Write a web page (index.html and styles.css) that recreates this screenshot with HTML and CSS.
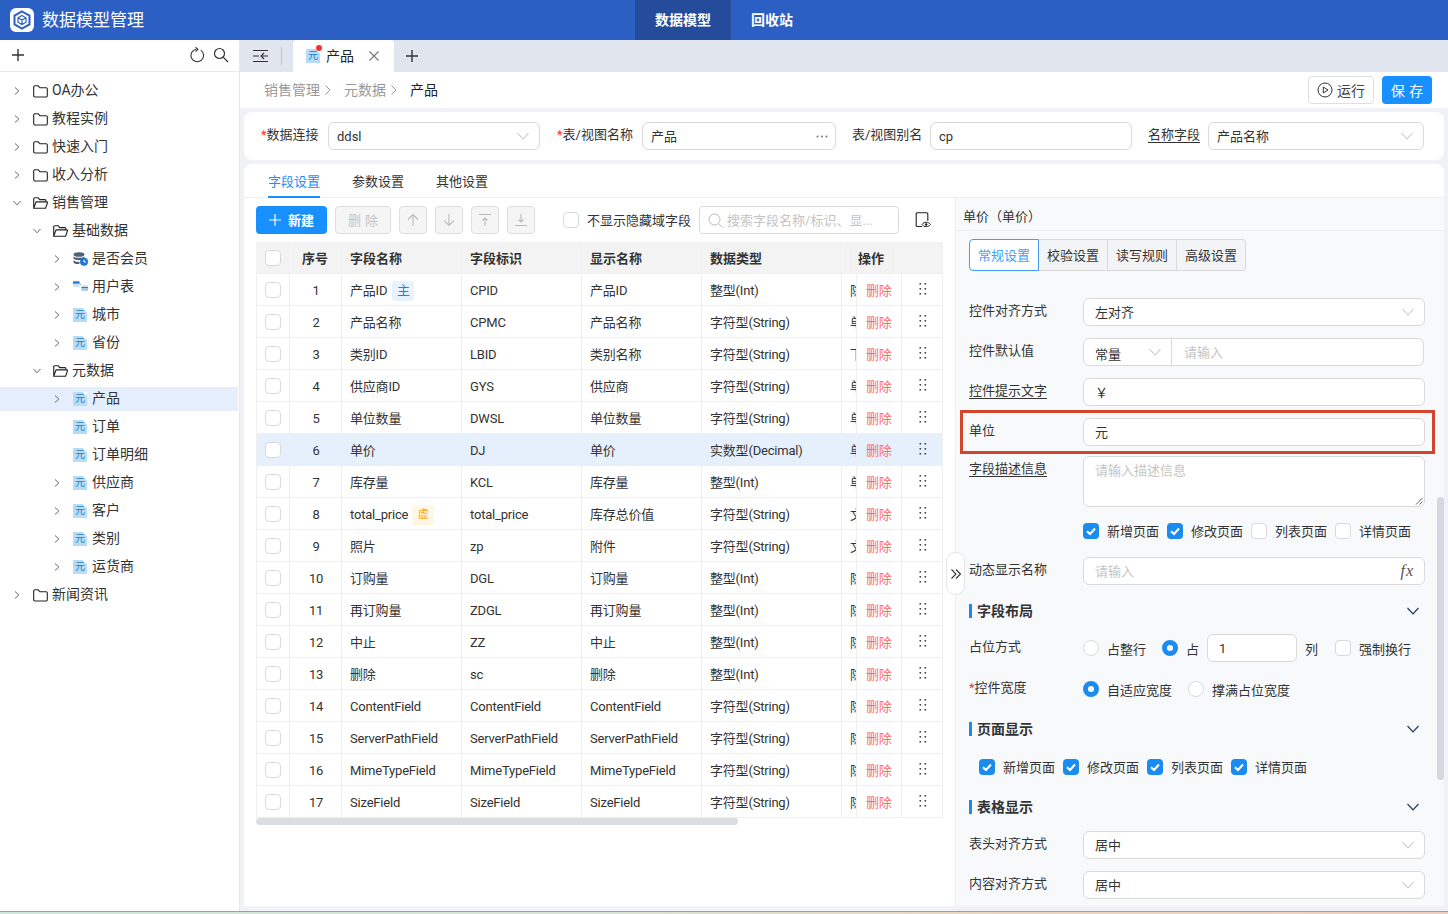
FILE: index.html
```html
<!DOCTYPE html>
<html lang="zh-CN">
<head>
<meta charset="utf-8">
<title>数据模型管理</title>
<link rel="stylesheet" href="styles.css">
</head>
<body>
<svg class="defs" width="0" height="0" aria-hidden="true">
  <symbol id="chev-r" viewBox="0 0 10 10"><path d="M3 1.500 6.800 5 3 8.500" fill="none" stroke="currentColor" stroke-width="1"/></symbol>
  <symbol id="chev-d" viewBox="0 0 10 10"><path d="M1.500 3 5 6.800 8.500 3" fill="none" stroke="currentColor" stroke-width="1"/></symbol>
  <symbol id="folder" viewBox="0 0 15 13"><path d="M.7 2a1.200 1.200 0 0 1 1.200-1.200h3.400l1.600 2h6.200a1.200 1.200 0 0 1 1.200 1.200v6.800a1.200 1.200 0 0 1-1.200 1.200H1.900a1.200 1.200 0 0 1-1.200-1.200Z" fill="none" stroke="#222" stroke-width="1.100"/></symbol>
  <symbol id="folder-open" viewBox="0 0 15 13"><path d="M.7 11.300V2a1.200 1.200 0 0 1 1.200-1.200h3.400l1.400 1.800h5.200a1 1 0 0 1 1 1v1.300M.7 11.300 3.100 4.900h10.800a.6.600 0 0 1 .6.8l-1.900 5.600Z" fill="none" stroke="#222" stroke-width="1.100"/></symbol>
  <symbol id="select" viewBox="0 0 14 14"><path d="M1.500 4 7 10 12.500 4" fill="none" stroke="#c4c7cc" stroke-width="1.100"/></symbol>
  <symbol id="arrow-sec" viewBox="0 0 14 14"><path d="M1.500 4 7 9.800 12.500 4" fill="none" stroke="#1f3a5f" stroke-width="1.200"/></symbol>
  <symbol id="check" viewBox="0 0 16 16"><rect width="16" height="16" rx="4" fill="#1a8cf0"/><path d="M4 8.200 7 11l5-5.500" fill="none" stroke="#fff" stroke-width="2"/></symbol>
  <symbol id="drag" viewBox="0 0 10 12"><g fill="#444"><rect x="1.500" y="0" width="1.600" height="1.600"/><rect x="6.500" y="0" width="1.600" height="1.600"/><rect x="1.500" y="5" width="1.600" height="1.600"/><rect x="6.500" y="5" width="1.600" height="1.600"/><rect x="1.500" y="10" width="1.600" height="1.600"/><rect x="6.500" y="10" width="1.600" height="1.600"/></g></symbol>
</svg>

<div class="app">
  <header class="topbar">
    <div class="brand">
      <span class="logo">
        <svg width="20" height="20" viewBox="0 0 20 20"><path d="M10 1.500 17.500 5.700v8.600L10 18.500 2.500 14.300V5.700Z" fill="none" stroke="#2b5fc4" stroke-width="2"/><path d="M10 5.500 14 7.800v4.400L10 14.500 6 12.200V7.800ZM6 7.800 10 10l4-2.200M10 10v4.500" fill="none" stroke="#2b5fc4" stroke-width="1.200"/></svg>
      </span>
      <span class="brand-name">数据模型管理</span>
    </div>
    <nav class="topnav">
      <a class="topnav-item is-active">数据模型</a>
      <a class="topnav-item">回收站</a>
    </nav>
  </header>

  <div class="workspace">
    <aside class="sidebar">
      <div class="side-tools">
        <svg class="tool-plus" width="14" height="14" viewBox="0 0 14 14"><path d="M7 1v12M1 7h12" stroke="#333" stroke-width="1.400" fill="none"/></svg>
        <svg class="tool-refresh" width="16" height="16" viewBox="0 0 16 16"><path d="M10.700 3.100A6.300 6.300 0 1 1 6.200 2.200M5.400.3 7.900 2.400 5.600 4.700" fill="none" stroke="#333" stroke-width="1.100"/></svg>
        <svg width="16" height="16" viewBox="0 0 16 16"><circle cx="6.500" cy="6.500" r="5" fill="none" stroke="#333" stroke-width="1.200"/><path d="m10.200 10.200 4.800 4.800" stroke="#333" stroke-width="1.200"/></svg>
      </div>
      <ul class="tree">
        <li class="node l0"><svg class="chev"><use href="#chev-r"/></svg><svg class="ico-folder"><use href="#folder"/></svg><span>OA办公</span></li>
        <li class="node l0"><svg class="chev"><use href="#chev-r"/></svg><svg class="ico-folder"><use href="#folder"/></svg><span>教程实例</span></li>
        <li class="node l0"><svg class="chev"><use href="#chev-r"/></svg><svg class="ico-folder"><use href="#folder"/></svg><span>快速入门</span></li>
        <li class="node l0"><svg class="chev"><use href="#chev-r"/></svg><svg class="ico-folder"><use href="#folder"/></svg><span>收入分析</span></li>
        <li class="node l0"><svg class="chev"><use href="#chev-d"/></svg><svg class="ico-folder"><use href="#folder-open"/></svg><span>销售管理</span></li>
        <li class="node l1"><svg class="chev"><use href="#chev-d"/></svg><svg class="ico-folder"><use href="#folder-open"/></svg><span>基础数据</span></li>
        <li class="node l2"><svg class="chev"><use href="#chev-r"/></svg>
          <svg class="ico-data" viewBox="0 0 15 14"><ellipse cx="6" cy="2.500" rx="5.500" ry="2.300" fill="#4d5f75"/><path d="M.5 4.300c1 2 10 2 11 0v2.200c-1 2-10 2-11 0ZM.5 8c1 2 5 2 6 1.800v2c-1 .6-5 .4-6-1.300Z" fill="#4d5f75"/><circle cx="11" cy="9.800" r="4" fill="#1f78d1"/><path d="M11 7.800v2.200h1.800" stroke="#fff" fill="none"/></svg>
          <span>是否会员</span></li>
        <li class="node l2"><svg class="chev"><use href="#chev-r"/></svg>
          <svg class="ico-data" viewBox="0 0 16 14"><rect x="0" y="1" width="7" height="6" fill="#cfe4f8"/><rect x="0" y="1" width="7" height="2.400" fill="#1f78d1"/><rect x="9" y="5" width="7" height="6.500" fill="#cfe4f8"/><rect x="9" y="7" width="7" height="1.300" fill="#1f78d1"/><rect x="9" y="9.500" width="7" height="1" fill="#7db5e8"/><path d="M7 4h2" stroke="#9ab"/></svg>
          <span>用户表</span></li>
        <li class="node l2"><svg class="chev"><use href="#chev-r"/></svg><i class="yuan">元</i><span>城市</span></li>
        <li class="node l2"><svg class="chev"><use href="#chev-r"/></svg><i class="yuan">元</i><span>省份</span></li>
        <li class="node l1"><svg class="chev"><use href="#chev-d"/></svg><svg class="ico-folder"><use href="#folder-open"/></svg><span>元数据</span></li>
        <li class="node l2 is-current"><svg class="chev"><use href="#chev-r"/></svg><i class="yuan">元</i><span>产品</span></li>
        <li class="node l2"><i class="chev"></i><i class="yuan">元</i><span>订单</span></li>
        <li class="node l2"><i class="chev"></i><i class="yuan">元</i><span>订单明细</span></li>
        <li class="node l2"><svg class="chev"><use href="#chev-r"/></svg><i class="yuan">元</i><span>供应商</span></li>
        <li class="node l2"><svg class="chev"><use href="#chev-r"/></svg><i class="yuan">元</i><span>客户</span></li>
        <li class="node l2"><svg class="chev"><use href="#chev-r"/></svg><i class="yuan">元</i><span>类别</span></li>
        <li class="node l2"><svg class="chev"><use href="#chev-r"/></svg><i class="yuan">元</i><span>运货商</span></li>
        <li class="node l0"><svg class="chev"><use href="#chev-r"/></svg><svg class="ico-folder"><use href="#folder"/></svg><span>新闻资讯</span></li>
      </ul>
    </aside>

    <main class="main">
      <div class="tabbar">
        <svg class="tab-collapse" width="16" height="14" viewBox="0 0 16 14"><path d="M0 1.500h15M0 12.500h15M0 7h6M15 7H8M11 4 8 7l3 3" fill="none" stroke="#333" stroke-width="1.100"/></svg>
        <span class="tab-sep"></span>
        <div class="tab">
          <span class="tab-icon"><i class="yuan">元</i><b class="dot"></b></span>
          <span class="tab-title">产品</span>
          <svg width="12" height="12" viewBox="0 0 12 12"><path d="m1.500 1.500 9 9M10.500 1.500l-9 9" stroke="#777" stroke-width="1.100"/></svg>
        </div>
        <svg class="tab-add" width="14" height="14" viewBox="0 0 14 14"><path d="M7 1v12M1 7h12" stroke="#333" stroke-width="1.400" fill="none"/></svg>
      </div>

      <div class="crumbbar">
        <div class="crumbs">
          <span class="crumb">销售管理</span><svg class="crumb-sep" width="8" height="12" viewBox="0 0 8 12"><path d="m1.500 1.500 4.500 4.500-4.500 4.500" fill="none" stroke="#999"/></svg>
          <span class="crumb">元数据</span><svg class="crumb-sep" width="8" height="12" viewBox="0 0 8 12"><path d="m1.500 1.500 4.500 4.500-4.500 4.500" fill="none" stroke="#999"/></svg>
          <span class="crumb-now">产品</span>
        </div>
        <div class="actions">
          <button class="btn-run"><svg width="16" height="16" viewBox="0 0 16 16"><circle cx="8" cy="8" r="7" fill="none" stroke="#333"/><path d="M6.300 5v6L11 8Z" fill="none" stroke="#333"/></svg>运行</button>
          <button class="btn-save">保 存</button>
        </div>
      </div>

      <section class="card-base">
        <label class="lbl req lbl-conn">数据连接</label>
        <div class="inp w-conn"><span>ddsl</span><svg class="sel-arrow"><use href="#select"/></svg></div>
        <label class="lbl req lbl-view">表/视图名称</label>
        <div class="inp w-view"><span>产品</span><svg class="dots" width="12" height="3" viewBox="0 0 12 3"><circle cx="1.500" cy="1.500" r="1" fill="#777"/><circle cx="6" cy="1.500" r="1" fill="#777"/><circle cx="10.500" cy="1.500" r="1" fill="#777"/></svg></div>
        <label class="lbl lbl-alias">表/视图别名</label>
        <div class="inp w-alias"><span>cp</span></div>
        <label class="lbl lbl-name link">名称字段</label>
        <div class="inp w-name"><span>产品名称</span><svg class="sel-arrow"><use href="#select"/></svg></div>
      </section>

      <section class="card-fields">
        <div class="fields-tabs">
          <a class="ftab is-active">字段设置</a>
          <a class="ftab">参数设置</a>
          <a class="ftab">其他设置</a>
        </div>
        <div class="fields-body">
          <div class="left">
            <div class="toolbar">
              <button class="btn-new"><svg width="12" height="12" viewBox="0 0 12 12"><path d="M6 0v12M0 6h12" stroke="#fff" stroke-width="1.200"/></svg>新建</button>
              <button class="btn-del">删 除</button>
              <button class="btn-icon"><svg width="14" height="14" viewBox="0 0 14 14"><path d="M7 13V1.500M2 6.500l5-5 5 5" fill="none" stroke="#bbb" stroke-width="1.100"/></svg></button>
              <button class="btn-icon"><svg width="14" height="14" viewBox="0 0 14 14"><path d="M7 1v11.500M2 7.500l5 5 5-5" fill="none" stroke="#bbb" stroke-width="1.100"/></svg></button>
              <button class="btn-icon"><svg width="14" height="14" viewBox="0 0 14 14"><path d="M1 1.500h12M7 13V5M4.500 7.500 7 5l2.500 2.500" fill="none" stroke="#bbb" stroke-width="1.100"/></svg></button>
              <button class="btn-icon"><svg width="14" height="14" viewBox="0 0 14 14"><path d="M1 12.500h12M7 1v8M4.500 6.500 7 9l2.500-2.500" fill="none" stroke="#bbb" stroke-width="1.100"/></svg></button>
              <label class="hide-opt"><span class="cb"></span>不显示隐藏域字段</label>
              <div class="search"><svg width="15" height="15" viewBox="0 0 15 15"><circle cx="6.500" cy="6.500" r="5.500" fill="none" stroke="#bbb"/><path d="m10.500 10.500 4 4" stroke="#bbb"/></svg><span>搜索字段名称/标识、显...</span></div>
              <svg class="eye-doc" width="16" height="16" viewBox="0 0 16 16"><path d="M7 14.500H2.200a1 1 0 0 1-1-1V1.700a1 1 0 0 1 1-1h9.600a1 1 0 0 1 1 1v7" fill="none" stroke="#222" stroke-width="1.100"/><path d="M7 12.500c2-3 6.500-3 8.500 0-2 2.800-6.500 2.800-8.500 0Z" fill="#fff" stroke="#222"/><circle cx="11.200" cy="12.500" r="1.200" fill="#222"/></svg>
            </div>

            <div class="grid">
              <div class="ghead">
                <div class="c"><span class="cb"></span></div>
                <div class="c ctr">序号</div>
                <div class="c">字段名称</div>
                <div class="c">字段标识</div>
                <div class="c">显示名称</div>
                <div class="c">数据类型</div>
                <div class="c"></div>
                <div class="c">操作</div>
                <div class="c"></div>
              </div>
              <div class="grow"><div class="c"><span class="cb"></span></div><div class="c ctr">1</div><div class="c">产品ID<em class="tag tag-pk">主</em></div><div class="c">CPID</div><div class="c">产品ID</div><div class="c">整型(Int)</div><div class="c clip">隐藏域</div><div class="c del">删除</div><div class="c ctr"><svg class="drag"><use href="#drag"/></svg></div></div>
              <div class="grow"><div class="c"><span class="cb"></span></div><div class="c ctr">2</div><div class="c">产品名称</div><div class="c">CPMC</div><div class="c">产品名称</div><div class="c">字符型(String)</div><div class="c clip">单行文本</div><div class="c del">删除</div><div class="c ctr"><svg class="drag"><use href="#drag"/></svg></div></div>
              <div class="grow"><div class="c"><span class="cb"></span></div><div class="c ctr">3</div><div class="c">类别ID</div><div class="c">LBID</div><div class="c">类别名称</div><div class="c">字符型(String)</div><div class="c clip">下拉框</div><div class="c del">删除</div><div class="c ctr"><svg class="drag"><use href="#drag"/></svg></div></div>
              <div class="grow"><div class="c"><span class="cb"></span></div><div class="c ctr">4</div><div class="c">供应商ID</div><div class="c">GYS</div><div class="c">供应商</div><div class="c">字符型(String)</div><div class="c clip">单行文本</div><div class="c del">删除</div><div class="c ctr"><svg class="drag"><use href="#drag"/></svg></div></div>
              <div class="grow"><div class="c"><span class="cb"></span></div><div class="c ctr">5</div><div class="c">单位数量</div><div class="c">DWSL</div><div class="c">单位数量</div><div class="c">字符型(String)</div><div class="c clip">单行文本</div><div class="c del">删除</div><div class="c ctr"><svg class="drag"><use href="#drag"/></svg></div></div>
              <div class="grow is-sel"><div class="c"><span class="cb"></span></div><div class="c ctr">6</div><div class="c">单价</div><div class="c">DJ</div><div class="c">单价</div><div class="c">实数型(Decimal)</div><div class="c clip">单行文本</div><div class="c del">删除</div><div class="c ctr"><svg class="drag"><use href="#drag"/></svg></div></div>
              <div class="grow"><div class="c"><span class="cb"></span></div><div class="c ctr">7</div><div class="c">库存量</div><div class="c">KCL</div><div class="c">库存量</div><div class="c">整型(Int)</div><div class="c clip">单行文本</div><div class="c del">删除</div><div class="c ctr"><svg class="drag"><use href="#drag"/></svg></div></div>
              <div class="grow"><div class="c"><span class="cb"></span></div><div class="c ctr">8</div><div class="c">total_price<em class="tag tag-vt">虚</em></div><div class="c">total_price</div><div class="c">库存总价值</div><div class="c">字符型(String)</div><div class="c clip">文本</div><div class="c del">删除</div><div class="c ctr"><svg class="drag"><use href="#drag"/></svg></div></div>
              <div class="grow"><div class="c"><span class="cb"></span></div><div class="c ctr">9</div><div class="c">照片</div><div class="c">zp</div><div class="c">附件</div><div class="c">字符型(String)</div><div class="c clip">文件</div><div class="c del">删除</div><div class="c ctr"><svg class="drag"><use href="#drag"/></svg></div></div>
              <div class="grow"><div class="c"><span class="cb"></span></div><div class="c ctr">10</div><div class="c">订购量</div><div class="c">DGL</div><div class="c">订购量</div><div class="c">整型(Int)</div><div class="c clip">隐藏域</div><div class="c del">删除</div><div class="c ctr"><svg class="drag"><use href="#drag"/></svg></div></div>
              <div class="grow"><div class="c"><span class="cb"></span></div><div class="c ctr">11</div><div class="c">再订购量</div><div class="c">ZDGL</div><div class="c">再订购量</div><div class="c">整型(Int)</div><div class="c clip">隐藏域</div><div class="c del">删除</div><div class="c ctr"><svg class="drag"><use href="#drag"/></svg></div></div>
              <div class="grow"><div class="c"><span class="cb"></span></div><div class="c ctr">12</div><div class="c">中止</div><div class="c">ZZ</div><div class="c">中止</div><div class="c">整型(Int)</div><div class="c clip">隐藏域</div><div class="c del">删除</div><div class="c ctr"><svg class="drag"><use href="#drag"/></svg></div></div>
              <div class="grow"><div class="c"><span class="cb"></span></div><div class="c ctr">13</div><div class="c">删除</div><div class="c">sc</div><div class="c">删除</div><div class="c">整型(Int)</div><div class="c clip">隐藏域</div><div class="c del">删除</div><div class="c ctr"><svg class="drag"><use href="#drag"/></svg></div></div>
              <div class="grow"><div class="c"><span class="cb"></span></div><div class="c ctr">14</div><div class="c">ContentField</div><div class="c">ContentField</div><div class="c">ContentField</div><div class="c">字符型(String)</div><div class="c clip">隐藏域</div><div class="c del">删除</div><div class="c ctr"><svg class="drag"><use href="#drag"/></svg></div></div>
              <div class="grow"><div class="c"><span class="cb"></span></div><div class="c ctr">15</div><div class="c">ServerPathField</div><div class="c">ServerPathField</div><div class="c">ServerPathField</div><div class="c">字符型(String)</div><div class="c clip">隐藏域</div><div class="c del">删除</div><div class="c ctr"><svg class="drag"><use href="#drag"/></svg></div></div>
              <div class="grow"><div class="c"><span class="cb"></span></div><div class="c ctr">16</div><div class="c">MimeTypeField</div><div class="c">MimeTypeField</div><div class="c">MimeTypeField</div><div class="c">字符型(String)</div><div class="c clip">隐藏域</div><div class="c del">删除</div><div class="c ctr"><svg class="drag"><use href="#drag"/></svg></div></div>
              <div class="grow"><div class="c"><span class="cb"></span></div><div class="c ctr">17</div><div class="c">SizeField</div><div class="c">SizeField</div><div class="c">SizeField</div><div class="c">字符型(String)</div><div class="c clip">隐藏域</div><div class="c del">删除</div><div class="c ctr"><svg class="drag"><use href="#drag"/></svg></div></div>
              <div class="hscroll"><span class="hthumb"></span></div>
            </div>
          </div>

          <div class="panel">
            <button class="panel-toggle"><svg width="12" height="12" viewBox="0 0 12 12"><path d="M1.500 1.500 6 6l-4.500 4.500M6 1.500 10.500 6 6 10.500" fill="none" stroke="#333" stroke-width="1.100"/></svg></button>
            <span class="vscroll"></span>
            <div class="panel-title">单价（单价）</div>
            <div class="panel-body">
              <div class="seg">
                <span class="seg-item is-active">常规设置</span><span class="seg-item">校验设置</span><span class="seg-item">读写规则</span><span class="seg-item">高级设置</span>
              </div>

              <div class="frow"><label class="flabel">控件对齐方式</label><div class="inp grow1"><span>左对齐</span><svg class="sel-arrow"><use href="#select"/></svg></div></div>
              <div class="frow"><label class="flabel">控件默认值</label>
                <div class="joined">
                  <div class="join-sel"><span>常量</span><svg class="sel-arrow"><use href="#select"/></svg></div>
                  <div class="join-inp">请输入</div>
                </div>
              </div>
              <div class="frow"><label class="flabel"><u>控件提示文字</u></label><div class="inp grow1"><span>￥</span></div></div>
              <div class="frow frow-unit"><label class="flabel">单位</label><div class="inp grow1"><span>元</span></div><span class="highlight"></span></div>
              <div class="frow frow-desc"><label class="flabel"><u>字段描述信息</u></label>
                <div class="textarea"><span>请输入描述信息</span><svg class="resize" width="8" height="8" viewBox="0 0 8 8"><path d="M1 7.500 7.500 1M4.500 7.500l3-3" stroke="#666" fill="none"/></svg></div>
              </div>
              <div class="checks checks-a">
                <label class="chk"><svg class="cbx"><use href="#check"/></svg>新增页面</label>
                <label class="chk"><svg class="cbx"><use href="#check"/></svg>修改页面</label>
                <label class="chk"><span class="cb"></span>列表页面</label>
                <label class="chk"><span class="cb"></span>详情页面</label>
              </div>
              <div class="frow frow-dyn"><label class="flabel">动态显示名称</label><div class="inp grow1 ph"><span>请输入</span><i class="fx">fx</i></div></div>

              <div class="sec sec-layout"><span class="sec-title">字段布局</span><svg class="sec-arrow"><use href="#arrow-sec"/></svg></div>
              <div class="frow frow-pos"><label class="flabel">占位方式</label>
                <div class="opts">
                  <label class="opt o-full"><span class="radio"></span>占整行</label>
                  <label class="opt o-col"><span class="radio on"></span>占</label>
                  <div class="inp num"><span>1</span></div>
                  <span class="col-unit">列</span>
                  <label class="opt"><span class="cb"></span>强制换行</label>
                </div>
              </div>
              <div class="frow frow-width"><label class="flabel req">控件宽度</label>
                <div class="opts">
                  <label class="opt o-auto"><span class="radio on"></span>自适应宽度</label>
                  <label class="opt"><span class="radio"></span>撑满占位宽度</label>
                </div>
              </div>

              <div class="sec sec-page"><span class="sec-title">页面显示</span><svg class="sec-arrow"><use href="#arrow-sec"/></svg></div>
              <div class="checks checks-b">
                <label class="chk"><svg class="cbx"><use href="#check"/></svg>新增页面</label>
                <label class="chk"><svg class="cbx"><use href="#check"/></svg>修改页面</label>
                <label class="chk"><svg class="cbx"><use href="#check"/></svg>列表页面</label>
                <label class="chk"><svg class="cbx"><use href="#check"/></svg>详情页面</label>
              </div>

              <div class="sec sec-table"><span class="sec-title">表格显示</span><svg class="sec-arrow"><use href="#arrow-sec"/></svg></div>
              <div class="frow"><label class="flabel">表头对齐方式</label><div class="inp grow1"><span>居中</span><svg class="sel-arrow"><use href="#select"/></svg></div></div>
              <div class="frow"><label class="flabel">内容对齐方式</label><div class="inp grow1"><span>居中</span><svg class="sel-arrow"><use href="#select"/></svg></div></div>
            </div>
          </div>
        </div>
      </section>
    </main>
  </div>
  <div class="wallpaper"></div>
</div>
</body>
</html>
```

FILE: styles.css
```css
* { box-sizing: border-box; }
html, body { margin: 0; padding: 0; height: 100%; overflow: hidden; }
body { font-family: Roboto, "Noto Sans CJK SC", sans-serif; font-size: 13px; color: #333; background: #f0f2f7; }
.defs { position: absolute; }
ul { list-style: none; margin: 0; padding: 0; }
button { font-family: inherit; cursor: pointer; padding: 0; }
em, i { font-style: normal; }

.app { width: 1448px; height: 914px; display: flex; flex-direction: column; overflow: hidden; }

/* Top bar */
.topbar { height: 40px; flex: none; background: #2b5fc4; display: flex; color: #fff; }
.brand { width: 635px; display: flex; align-items: center; padding-left: 10px; }
.logo { width: 24px; height: 24px; border-radius: 6px; background: #fff; display: flex; align-items: center; justify-content: center; margin-right: 8px; }
.brand-name { font-size: 17px; line-height: 24px; }
.topnav { display: flex; }
.topnav-item { width: 96px; height: 40px; line-height: 41px; text-align: center; font-size: 14px; font-weight: 700; }
.topnav-item + .topnav-item { width: 84px; text-align: left; padding-left: 20px; }
.topnav-item.is-active { background: #254c9b; }

.workspace { flex: 1; min-height: 0; display: flex; }

/* Sidebar */
.sidebar { width: 240px; flex: none; background: #fff; border-right: 1px solid #e6e8ec; }
.side-tools { height: 32px; border-bottom: 1px solid #e8e8e8; display: flex; align-items: center; gap: 7px; padding: 0 10px 2px 11px; }
.tool-plus { margin-right: auto; }
.tree { padding-top: 7px; }
.node { height: 24px; margin-bottom: 4px; display: flex; align-items: center; font-size: 14px; line-height: 22px; color: #333; }
.node > span { padding-bottom: 2px; }
.node.l0 { padding-left: 12px; }
.node.l1 { padding-left: 32px; }
.node.l2 { padding-left: 52px; }
.node.is-current { background: #e4eefc; margin-right: 1px; }
.chev { width: 10px; height: 10px; margin-right: 11px; color: #666; flex: none; display: block; }
.ico-folder { width: 15px; height: 13px; margin-right: 4px; flex: none; }
.ico-data { width: 15px; height: 14px; margin-right: 4px; flex: none; }
.yuan { width: 14px; height: 14px; margin-right: 5px; flex: none; display: block; background: linear-gradient(225deg, #fff 0 3px, #b8dcf6 3px); font-size: 10px; line-height: 14px; text-align: center; color: #1f7fc0; }

/* Tabs */
.main { flex: 1; min-width: 0; display: flex; flex-direction: column; }
.tabbar { height: 32px; flex: none; background: #e1e5ee; display: flex; align-items: center; padding-left: 13px; }
.tab-sep { width: 1px; height: 18px; background: #bfc3cc; margin: 0 11px 0 12px; }
.tab { width: 101px; height: 32px; background: #fff; display: flex; align-items: center; padding: 0 8px 0 13px; border-radius: 4px 4px 0 0; }
.tab-icon { position: relative; width: 14px; height: 14px; margin-right: 6px; }
.tab-icon .yuan { margin: 0; }
.dot { position: absolute; right: -2px; top: -4px; width: 6px; height: 6px; border-radius: 50%; background: #f5312d; }
.tab-title { font-size: 14px; color: #222; margin-right: 14px; line-height: 20px; }
.tab-add { margin-left: 11px; }

.crumbbar { height: 36px; flex: none; background: #fff; display: flex; align-items: center; padding: 0 16px 0 24px; margin-bottom: 4px; }
.crumbs { display: flex; align-items: center; font-size: 14px; flex: 1; }
.crumb { color: #999; padding-bottom: 2px; }
.crumb-sep { margin: 0 12px 0 4px; }
.crumb-now { color: #222; padding-bottom: 2px; }
.actions { display: flex; gap: 8px; }
.btn-run { width: 66px; height: 28px; background: #fff; border: 1px solid #dcdfe4; border-radius: 4px; display: flex; align-items: center; justify-content: center; gap: 4px; font-size: 14px; color: #444; }
.btn-save { width: 50px; height: 28px; background: #1890ff; border: 0; border-radius: 4px; color: #fff; font-size: 14px; word-spacing: 1px; }

/* Base form card */
.card-base { height: 48px; flex: none; margin: 0 4px 4px; background: #fff; border-radius: 8px; display: flex; align-items: center; padding-left: 17px; }
.lbl { line-height: 20px; margin-top: -2px; color: #333; white-space: nowrap; flex: none; }
.req::before { content: "*"; color: #f5312d; }
.link { text-decoration: underline; text-underline-offset: 3px; }
.inp { height: 28px; background: #fff; border: 1px solid #d9d9d9; border-radius: 6px; display: flex; align-items: center; justify-content: space-between; padding: 0 9px 0 8px; color: #333; flex: none; line-height: 20px; }
.inp > span, .join-sel > span { padding-top: 2px; }
.lbl-conn { width: 67px; }
.w-conn { width: 212px; }
.lbl-view { width: 85px; margin-left: 17px; }
.w-view { width: 194px; }
.dots { flex: none; margin-right: -2px; }
.lbl-alias { width: 78px; margin-left: 16px; }
.w-alias { width: 202px; }
.lbl-name { margin-left: 16px; margin-right: 8px; }
.w-name { width: 216px; }
.sel-arrow { width: 14px; height: 14px; flex: none; }

/* Fields card */
.card-fields { flex: 1; min-height: 0; margin: 0 4px 5px; background: #fff; border-radius: 8px 8px 0 0; display: flex; flex-direction: column; overflow: hidden; }
.fields-tabs { height: 34px; flex: none; display: flex; gap: 32px; padding-left: 24px; border-bottom: 1px solid #eceef1; }
.ftab { height: 34px; line-height: 36px; color: #333; }
.ftab.is-active { color: #1890ff; border-bottom: 2px solid #1890ff; }
.fields-body { flex: 1; min-height: 0; display: flex; }
.left { width: 711px; flex: none; padding: 8px 0 0 12px; }

.toolbar { height: 28px; display: flex; align-items: center; }
.btn-new { width: 71px; height: 28px; padding-bottom: 2px; background: #1890ff; border: 0; border-radius: 4px; color: #fff; display: flex; align-items: center; justify-content: center; gap: 7px; font-size: 13px; font-weight: 700; margin-right: 8px; }
.btn-new svg { margin-bottom: -2px; }
.btn-del { width: 56px; height: 28px; padding-bottom: 2px; background: #f5f5f5; border: 1px solid #dedede; border-radius: 4px; color: #c4c4c4; font-size: 13px; margin-right: 8px; word-spacing: 1px; }
.btn-icon { width: 28px; height: 28px; background: #f5f5f5; border: 1px solid #dedede; border-radius: 4px; display: flex; align-items: center; justify-content: center; margin-right: 8px; }
.hide-opt { display: flex; align-items: center; gap: 8px; margin-left: 20px; margin-right: 8px; padding-bottom: 2px; white-space: nowrap; }
.hide-opt .cb { margin-bottom: -2px; }
.cb { width: 16px; height: 16px; flex: none; display: block; background: #fff; border: 1px solid #d9d9d9; border-radius: 4px; }
.search { width: 200px; height: 28px; border: 1px solid #d9d9d9; border-radius: 4px; background: #fff; display: flex; align-items: center; gap: 4px; padding-left: 8px; color: #c4c4c4; white-space: nowrap; }
.search span { padding-bottom: 2px; }
.eye-doc { margin-left: 16px; }

.grid { margin-top: 8px; width: 687px; }
.ghead, .grow { display: grid; height: 32px; border-bottom: 1px solid #efefef; }
.ghead { grid-template-columns: 33px 52px 120px 120px 120px 140px 8px 45px 49px; background: #f3f3f3; font-weight: 700; color: #333; }
.grow { grid-template-columns: 33px 52px 120px 120px 120px 140px 15px 45px 41px 1px; background: #fff; border-left: 1px solid #efefef; border-right: 1px solid #efefef; margin-right: 0; }
.grow.is-sel { background: #e6f0fc; }
.c { display: flex; align-items: center; padding: 2px 0 0 8px; border-right: 1px solid #efefef; white-space: nowrap; overflow: hidden; line-height: 20px; color: #333; }
.grow .c { letter-spacing: -.2px; }
.ghead .c { padding-left: 9px; }
.grow > .c:first-child { padding: 1px 0 0 8px; }
.ghead > .c:first-child { padding: 1px 0 0 9px; }
.ctr, .ghead .ctr { justify-content: center; padding-left: 1px; }
.clip { display: block; line-height: 32px; padding-top: 1px; }
.del { color: #ff6b66; padding-left: 9px; }
.drag { width: 10px; height: 12px; margin-top: -4px; }
.tag { display: inline-block; width: 22px; height: 20px; margin-left: 4px; border-radius: 3px; line-height: 20px; text-align: center; }
.tag-pk { background: #e8f3ff; color: #2a7de1; margin-left: 5px; }
.tag-vt { background: #fff7e6; color: #f5a623; font-size: 11px; }
.hscroll { height: 7px; margin-top: 0; }
.hthumb { display: block; width: 482px; height: 7px; background: #dadde2; border-radius: 4px; }

/* Right panel */
.panel { flex: 1; min-width: 0; position: relative; background: #f8f9fb; border-left: 1px solid #eceef1; }
.panel-toggle { position: absolute; left: -10px; top: 354px; width: 19px; height: 43px; background: #fff; border: 1px solid #e4e6ea; border-radius: 9px; display: flex; align-items: center; justify-content: center; z-index: 2; }
.vscroll { position: absolute; right: 0; top: 299px; width: 7px; height: 283px; border-radius: 4px; background: #d5d8e0; }
.panel-title { height: 33px; line-height: 38px; padding-left: 7px; color: #333; border-bottom: 1px solid #eceef1; }
.panel-body { padding: 8px 19px 0 13px; }
.seg { display: flex; width: 277px; height: 32px; margin-bottom: 27px; }
.seg-item { width: 69px; height: 32px; line-height: 32px; text-align: center; background: #f3f4f6; border: 1px solid #d9d9d9; border-left: 0; color: #333; }
.seg-item:first-child { border-radius: 4px 0 0 4px; width: 70px; }
.seg-item:last-child { border-radius: 0 4px 4px 0; }
.seg-item.is-active { background: #fff; color: #40a0f8; border: 1px solid #40a0f8; }

.frow { display: flex; align-items: flex-start; margin-bottom: 12px; position: relative; }
.flabel { width: 114px; flex: none; line-height: 20px; padding-top: 3px; color: #333; }
.flabel u { text-underline-offset: 3px; }
.frow .inp { padding: 0 9px 0 11px; }
.grow1 { flex: 1; min-width: 0; }
.joined { flex: 1; height: 28px; display: flex; background: #fff; border: 1px solid #d9d9d9; border-radius: 6px; margin-right: 1px; }
.join-sel { width: 88px; display: flex; align-items: center; justify-content: space-between; padding: 0 9px 0 11px; border-right: 1px solid #d9d9d9; }
.join-inp { flex: 1; line-height: 28px; padding-left: 12px; color: #c4c4c4; }
.frow-unit { margin-bottom: 10px; }
.highlight { position: absolute; left: -9px; right: -10px; top: -8px; bottom: -8px; border: 3px solid #d4452e; pointer-events: none; }
.frow-desc { margin-bottom: 16px; }
.textarea { flex: 1; height: 51px; position: relative; background: #fff; border: 1px solid #d9d9d9; border-radius: 6px; padding: 4px 11px; line-height: 20px; color: #c4c4c4; }
.resize { position: absolute; right: 1px; bottom: 1px; }
.checks { display: flex; gap: 8px; height: 16px; }
.checks-a { margin-left: 114px; margin-bottom: 18px; }
.checks-b { margin-left: 10px; margin-bottom: 25px; }
.chk { display: flex; align-items: center; gap: 8px; width: 76px; padding-top: 2px; white-space: nowrap; line-height: 16px; }
.chk .cb, .cbx { margin-top: -2px; }
.cbx { width: 16px; height: 16px; flex: none; }
.ph span { color: #c4c4c4; }
.fx { font-family: "Liberation Serif", serif; font-style: italic; font-size: 16px; letter-spacing: 1px; color: #555; margin-right: 1px; }
.frow-dyn { margin-bottom: 19px; }

.sec { display: flex; align-items: center; justify-content: space-between; height: 14px; border-left: 3px solid #1a8cf0; padding-left: 5px; padding-right: 5px; }
.sec-title { font-size: 14px; font-weight: 700; color: #333; line-height: 14px; }
.sec-arrow { width: 14px; height: 14px; }
.sec-layout { margin-bottom: 16px; }
.sec-page { margin-bottom: 23px; }
.sec-table { margin-bottom: 17px; }

.opts { flex: 1; height: 28px; display: flex; align-items: center; }
.opt { display: flex; align-items: center; gap: 8px; white-space: nowrap; }
.radio { width: 16px; height: 16px; flex: none; display: block; background: #fff; border: 1px solid #d9d9d9; border-radius: 50%; }
.radio.on { border: 5px solid #1a8cf0; }
.o-full { margin-right: 16px; }
.o-col { margin-right: 8px; }
.frow .num { width: 90px; }
.col-unit { margin: 0 17px 0 8px; }
.frow-pos { margin-bottom: 13px; }
.frow-width { margin-bottom: 19px; }
.o-auto { margin-right: 16px; }

.wallpaper { height: 3px; flex: none; border-top: 1px solid #9aa0a6; background: linear-gradient(90deg, #cfe6da, #d8e4d6 40%, #e8d6c2 70%, #eccfc2); }
```
